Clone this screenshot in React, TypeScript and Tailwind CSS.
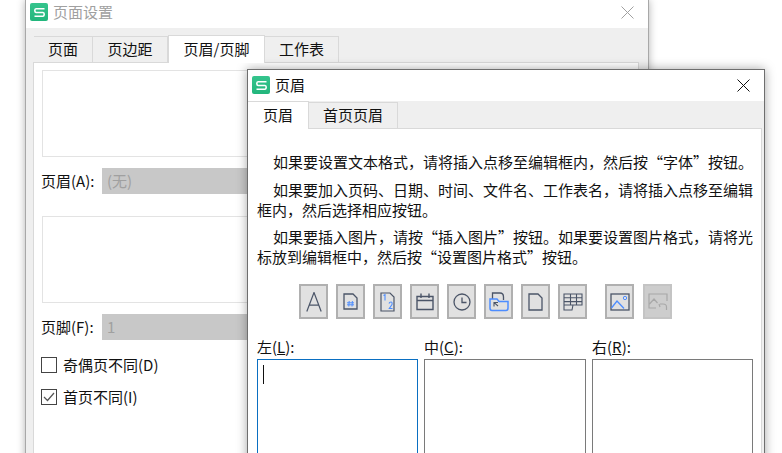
const font = { fontFamily: '"Noto Sans CJK SC", sans-serif' };

function Logo() {
  return (
    <span className="flex h-[18px] w-[18px] shrink-0 items-center justify-center rounded-[2px] bg-gradient-to-b from-[#35c48d] to-[#22b67c]">
      <svg width="11" height="9" viewBox="0 0 11 9" fill="none" stroke="#fff" strokeWidth="1.6">
        <path d="M10.5 0.8H2Q0.8 0.8 0.8 2.6T2 4.5H9Q10.2 4.5 10.2 6.3T9 8.2H0.5" />
      </svg>
    </span>
  );
}

function Close({ color }: { color: string }) {
  return (
    <svg width="13" height="13" viewBox="0 0 13 13" stroke={color} strokeWidth="1" fill="none">
      <path d="M0.5 0.5L12.5 12.5M12.5 0.5L0.5 12.5" />
    </svg>
  );
}

function TabButton({ label, active, className }: { label: string; active?: boolean; className: string }) {
  return (
    <div
      className={
        active
          ? `relative z-[1] -mb-px flex h-[28px] items-center justify-center border border-b-0 border-[#d9d9d9] bg-white ${className}`
          : `flex h-[26px] items-center justify-center border border-b-0 border-l-0 border-[#d9d9d9] bg-[#efefef] ${className}`
      }
    >
      {label}
    </div>
  );
}

function PageField({ label, value, className }: { label: string; value: string; className: string }) {
  return (
    <div className={`-ml-[1px] flex items-center ${className}`}>
      <span className="w-[61px]">{label}</span>
      <div className="flex h-[26px] flex-1 items-center bg-[#c8c8c8] pl-[5px] text-[#a0a0a0]">{value}</div>
    </div>
  );
}

function IconButton({ children, disabled }: { children: React.ReactNode; disabled?: boolean }) {
  return (
    <div
      className={`flex h-[35px] w-[29px] items-center justify-center border-2 ${disabled ? "border-[#c4c4c4] bg-[#cdcdcd]" : "border-[#b0b0b0] bg-[#e1e1e1]"}`}
    >
      {children}
    </div>
  );
}

const ink = "#4b5568";
const blue = "#4d8dff";

const icons = [
  <svg key="a" width="16" height="20" viewBox="0 0 16 20" fill="none" stroke={ink} strokeWidth="1.2">
    <path d="M0.8 19.5L8 0.5L15.2 19.5M3.2 13.2H12.8" />
  </svg>,
  <svg key="hash" width="15" height="17" viewBox="0 0 15 17" fill="none">
    <path d="M1 1H10L14 5V16H1Z" stroke={ink} strokeWidth="1.3" />
    <path d="M6.2 8L5.8 13.5M9.4 8L9 13.5M4 9.8H11M4 11.8H11" stroke={blue} strokeWidth="1" />
  </svg>,
  <svg key="pages" width="15" height="20" viewBox="0 0 15 20" fill="none">
    <path d="M1 1H10L14 5V19H1Z" stroke={ink} strokeWidth="1.2" />
    <path d="M3.5 3.5L5 2.7V8.5M9 11.5Q9.5 10 11 10T12 12.5L9.3 16.5H12.5" stroke={blue} strokeWidth="1.1" />
  </svg>,
  <svg key="calendar" width="18" height="18" viewBox="0 0 18 18" fill="none" stroke={ink} strokeWidth="1.4">
    <path d="M1 3.5H17V16.5H1ZM1 7.5H17M5 0.5V5M13 0.5V5" />
  </svg>,
  <svg key="clock" width="18" height="18" viewBox="0 0 18 18" fill="none" stroke={ink} strokeWidth="1.3">
    <circle cx="9" cy="9" r="8" />
    <path d="M9 4.5V9.5H13.5" />
  </svg>,
  <svg key="folder" width="20" height="20" viewBox="0 0 20 20" fill="none">
    <path d="M3.5 7V1H11Q14.5 1 14.5 5V8" stroke={ink} strokeWidth="1.3" />
    <path d="M1 7H8L10 9.5H19V16Q19 18.5 17 18.5H3Q1 18.5 1 16Z" stroke={blue} strokeWidth="1.5" />
    <path d="M5 14.5V10.5H9M5.2 10.7L9 14" stroke={ink} strokeWidth="1.1" />
  </svg>,
  <svg key="file" width="15" height="18" viewBox="0 0 15 18" fill="none" stroke={ink} strokeWidth="1.3">
    <path d="M1 1H10L14 5V17H1Z" />
  </svg>,
  <svg key="sheet" width="20" height="18" viewBox="0 0 20 18" fill="none" stroke={ink} strokeWidth="1.1">
    <path d="M1 1H19V12H10L9 17H1ZM1 4.8H19M1 8.6H19M1 12H10M7.5 1V12M13.5 1V12" />
  </svg>,
];

export default function App() {
  return (
    <div className="relative h-[453px] w-[782px] overflow-hidden bg-white text-[15px] text-[#111]" style={font}>
      {/* back window */}
      <div className="absolute left-[25px] top-0 h-[600px] w-[624px] border-x border-[#a8a8a8] bg-[#efefef] shadow-[0_0_8px_rgba(0,0,0,0.3)]">
        <div className="flex h-[28px] items-center gap-[5px] bg-white pb-[4px] pl-[4px] pr-[14px]">
          <Logo />
          <span className="flex-1 text-[#a0a0a0]">页面设置</span>
          <Close color="#a0a0a0" />
        </div>
        <div className="flex pl-[8px] pt-[8px]">
          <TabButton label="页面" className="w-[59px] border-l" />
          <TabButton label="页边距" className="w-[75px]" />
          <TabButton label="页眉/页脚" active className="-mt-[1px] w-[97px]" />
          <TabButton label="工作表" className="w-[74px]" />
        </div>
        <div className="ml-[7px] mr-[9px] h-[500px] border border-[#d9d9d9] bg-white px-[8px] pt-[7px]">
          <div className="h-[87px] border border-[#e3e3e3]" />
          <PageField label="页眉(A):" value="(无)" className="mt-[11px]" />
          <div className="mt-[22px] h-[87px] border border-[#e3e3e3]" />
          <PageField label="页脚(F):" value="1" className="mt-[11px]" />
          <div className="-ml-[1px] mt-[14px] flex items-center gap-[6px]">
            <span className="h-[16px] w-[16px] border border-[#444]" />
            <span>奇偶页不同(D)</span>
          </div>
          <div className="-ml-[1px] mt-[9px] flex items-center gap-[6px]">
            <span className="flex h-[16px] w-[16px] items-center justify-center border border-[#444]">
              <svg width="12" height="10" viewBox="0 0 12 10" fill="none" stroke="#555" strokeWidth="1.2">
                <path d="M1 5L4.5 8.5L11 1" />
              </svg>
            </span>
            <span>首页不同(I)</span>
          </div>
        </div>
      </div>

      {/* front window */}
      <div className="absolute left-[247px] top-[69px] h-[500px] w-[518px] border border-[#6e6e6e] bg-[#efefef] shadow-[0_0_10px_rgba(0,0,0,0.35)]">
        <div className="flex h-[31px] items-center gap-[5px] bg-white pb-[1px] pl-[4px] pr-[14px]">
          <Logo />
          <span className="flex-1">页眉</span>
          <Close color="#111" />
        </div>
        <div className="flex">
          <TabButton label="页眉" active className="w-[61px] border-l-0" />
          <TabButton label="首页页眉" className="mt-[1px] w-[89px]" />
        </div>
        <div className="mr-[2px] h-[400px] border border-l-0 border-[#d9d9d9] bg-white pl-[9px] pr-[7px] pt-[23px]">
          <p className="indent-[16px] leading-[20px]">如果要设置文本格式，请将插入点移至编辑框内，然后按“字体”按钮。</p>
          <div className="mt-[8px] indent-[16px] leading-[20px]">如果要加入页码、日期、时间、文件名、工作表名，请将插入点移至编辑框内，然后选择相应按钮。</div>
          <div className="mt-[7px] indent-[16px] leading-[20px]">如果要插入图片，请按“插入图片”按钮。如果要设置图片格式，请将光标放到编辑框中，然后按“设置图片格式”按钮。</div>
          <div className="mt-[17px] flex pl-[42px]">
            <div className="flex gap-[8px]">
              {icons.map((icon) => (
                <IconButton key={icon.key}>{icon}</IconButton>
              ))}
            </div>
            <div className="ml-[18px] flex gap-[9px]">
              <IconButton>
                <svg width="20" height="18" viewBox="0 0 20 18" fill="none">
                  <rect x="1" y="1" width="18" height="16" stroke={ink} strokeWidth="1.3" />
                  <path d="M1.5 15L7 8L14 15.5" stroke={blue} strokeWidth="1.3" />
                  <circle cx="15" cy="5" r="1.7" stroke={blue} />
                </svg>
              </IconButton>
              <IconButton disabled>
                <svg width="20" height="18" viewBox="0 0 20 18" fill="none" stroke="#a8a8a8" strokeWidth="1.2">
                  <path d="M8 15H1V1H19V8M1.5 11L6 6L9.5 10M11 11L12 14M12 11H15Q18.5 11 18.5 14V17" />
                </svg>
              </IconButton>
            </div>
          </div>
          <div className="mt-[19px] grid grid-cols-[161px_162px_161px] gap-x-[6px] leading-[18px]">
            <HeaderSlot zone="左" keyName="L" focused />
            <HeaderSlot zone="中" keyName="C" />
            <HeaderSlot zone="右" keyName="R" />
          </div>
        </div>
      </div>
    </div>
  );
}

function HeaderSlot({ zone, keyName, focused }: { zone: string; keyName: string; focused?: boolean }) {
  return (
    <div>
      <div>
        {zone}(<span className="underline">{keyName}</span>):
      </div>
      <div className={`mt-[3px] h-[200px] border pl-[5px] pt-[5px] ${focused ? "border-[#0a6fc2]" : "border-[#7a7a7a]"}`}>
        {focused && <div className="h-[19px] w-px bg-[#111]" />}
      </div>
    </div>
  );
}
